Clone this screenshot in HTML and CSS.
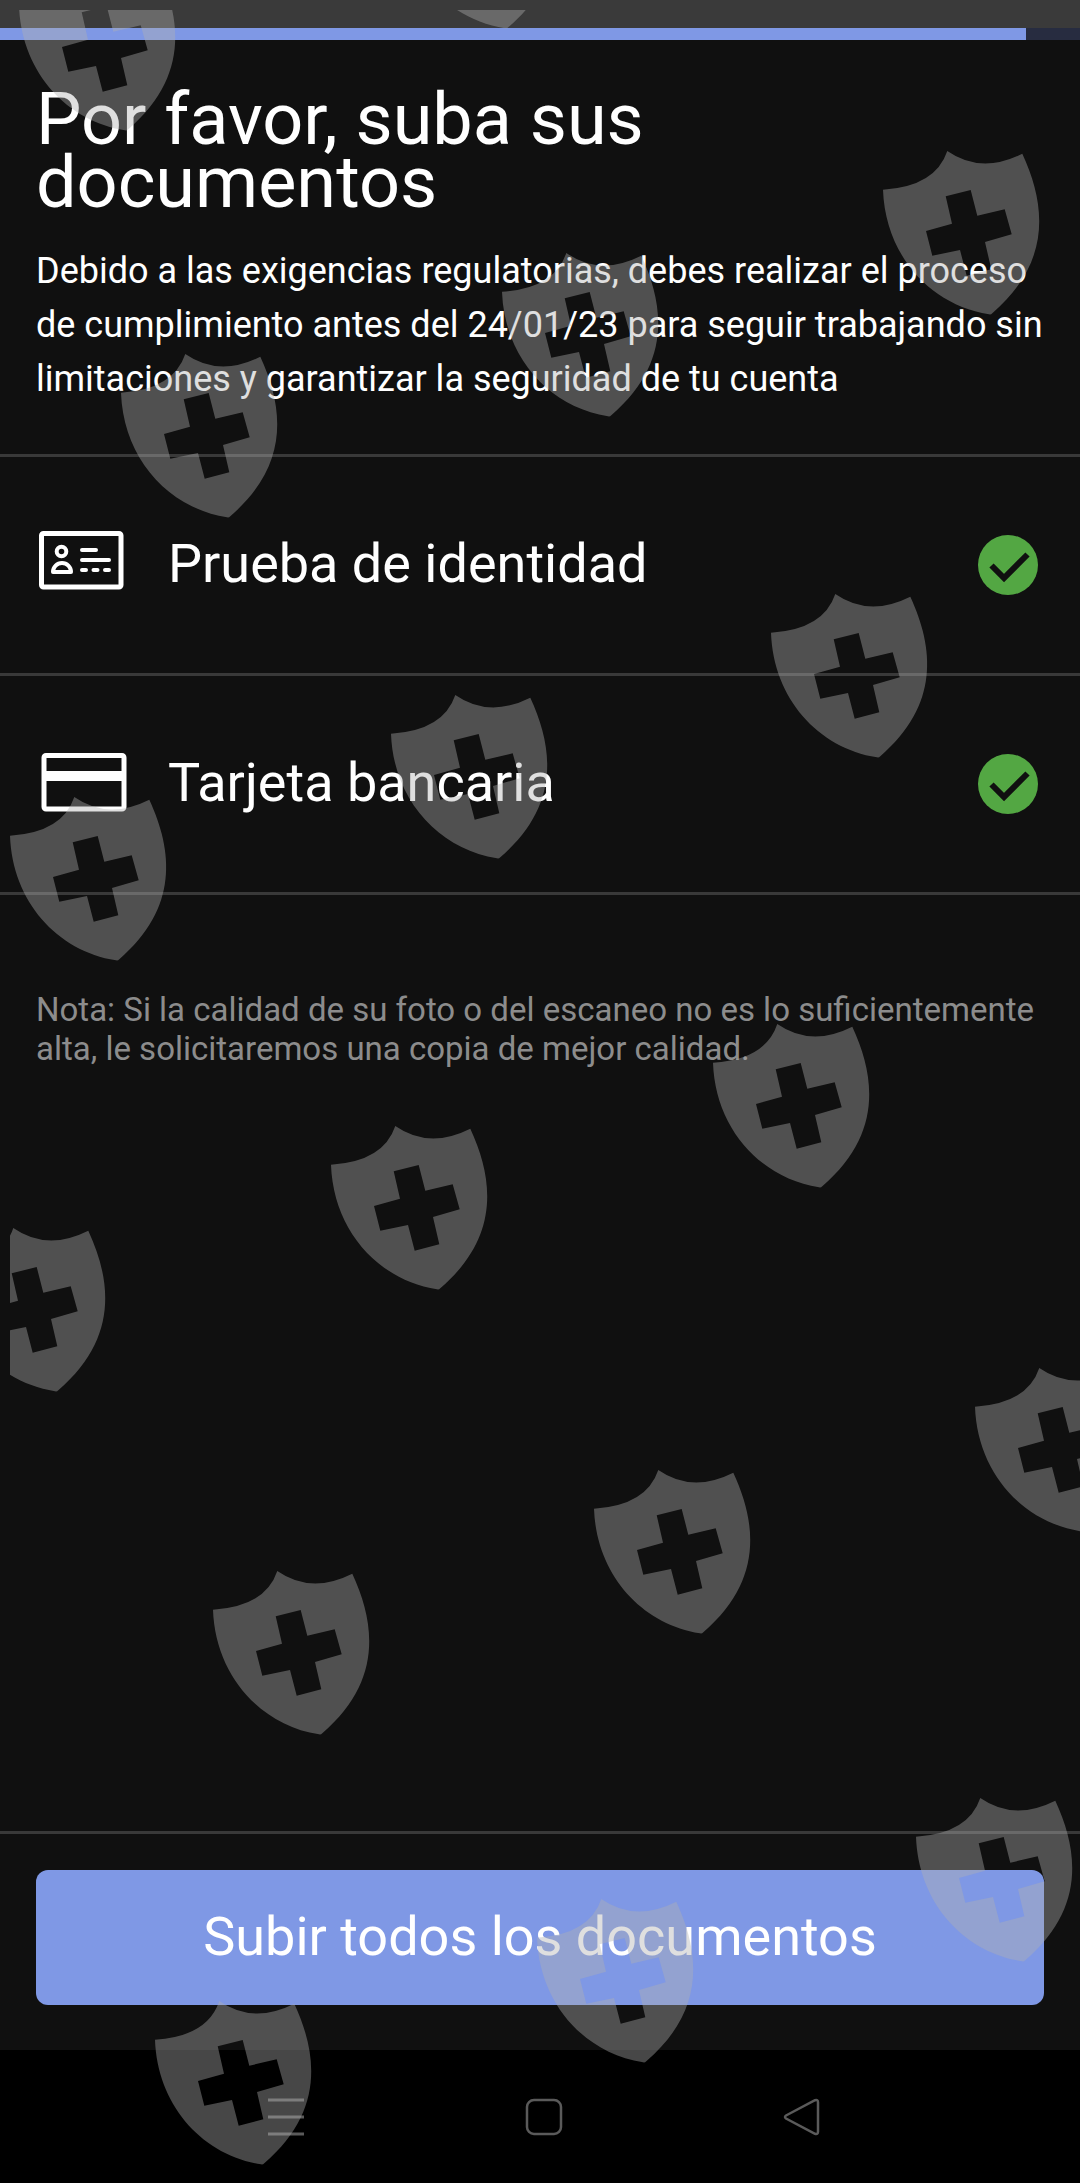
FILE: index.html
```html
<!DOCTYPE html>
<html lang="es">
<head>
<meta charset="utf-8">
<meta name="viewport" content="width=device-width, initial-scale=1">
<title>Suba sus documentos</title>
<link rel="stylesheet" href="styles.css">
</head>
<body>
<div class="status-bar"></div>
<div class="progress" role="progressbar" aria-label="Progreso" aria-valuenow="95" aria-valuemin="0" aria-valuemax="100">
  <div class="progress-fill" style="width: 95%"></div>
</div>

<main class="content">
  <header class="intro">
    <h1 class="title">Por favor, suba sus documentos</h1>
    <p class="lead">Debido a las exigencias regulatorias, debes realizar el proceso de cumplimiento antes del 24/01/23 para seguir trabajando sin limitaciones y garantizar la seguridad de tu cuenta</p>
  </header>

  <ul class="documents">
    <li class="document">
      <svg class="document-icon" viewBox="0 0 96 72" fill="none" stroke="currentColor" stroke-width="5" stroke-linecap="round" stroke-linejoin="round" aria-hidden="true">
        <rect x="5.500" y="4.500" width="79.500" height="53.500" rx="2"/>
        <circle cx="25.500" cy="22.500" r="4.800" stroke-width="4"/>
        <path d="M17 43c0-5 4-9 9-9s9 4 9 9z" stroke-width="4"/>
        <path d="M46 21h14M46 31h27M46 41h4M57.500 41h4M69 41h4" stroke-width="4"/>
      </svg>
      <span class="document-name">Prueba de identidad</span>
      <svg class="document-check" viewBox="0 0 60 60" role="img" aria-label="Completado">
        <circle cx="30" cy="30" r="30" fill="#53a743"/>
        <path d="M13.500 30.500L26 43L49.500 19.500" fill="none" stroke="#101010" stroke-width="6"/>
      </svg>
    </li>
    <li class="document">
      <svg class="document-icon" viewBox="0 0 96 72" fill="none" stroke="currentColor" stroke-width="5" stroke-linejoin="round" aria-hidden="true">
        <rect x="8" y="7.500" width="80" height="53.500" rx="2"/>
        <path d="M8 28h80" stroke-width="10"/>
      </svg>
      <span class="document-name">Tarjeta bancaria</span>
      <svg class="document-check" viewBox="0 0 60 60" role="img" aria-label="Completado">
        <circle cx="30" cy="30" r="30" fill="#53a743"/>
        <path d="M13.500 30.500L26 43L49.500 19.500" fill="none" stroke="#101010" stroke-width="6"/>
      </svg>
    </li>
  </ul>

  <p class="note">Nota: Si la calidad de su foto o del escaneo no es lo suficientemente alta, le solicitaremos una copia de mejor calidad.</p>
</main>

<footer class="actions">
  <button class="submit" type="button">Subir todos los documentos</button>
</footer>

<nav class="system-nav" aria-label="Sistema">
  <button class="nav-button" type="button" aria-label="Menú">
    <svg class="nav-icon" viewBox="0 0 40 40" fill="none" stroke="currentColor" stroke-width="3" aria-hidden="true"><path d="M1 4h36M1 21h36M1 38h36"/></svg>
  </button>
  <button class="nav-button" type="button" aria-label="Inicio">
    <svg class="nav-icon" viewBox="0 0 40 40" fill="none" stroke="currentColor" stroke-width="2.500" aria-hidden="true"><rect x="3" y="4" width="34" height="34" rx="7"/></svg>
  </button>
  <button class="nav-button" type="button" aria-label="Atrás">
    <svg class="nav-icon" viewBox="0 0 40 40" fill="none" stroke="currentColor" stroke-width="2.500" aria-hidden="true"><path d="M5 19.500L34 4.200q3-1 3 2v29.600q0 3-3 2L5 22.500q-2-1.500 0-3z"/></svg>
  </button>
</nav>

<svg class="watermark" aria-hidden="true">
  <defs>
    <path id="shield" fill-rule="evenodd" d="M0 38.700Q52.500 35.500 64.300 0Q98 23.500 139.300 2.700C163 54 169 111 109 162.500Q108 163.700 106 163.300C47 154 2.300 104 0 38.700ZM62.700 45.300L87.700 39L94.300 64.700L121.700 58.300L128.700 83.300L102 91L108.300 118.300L83.700 124.700L77 99L49.300 104.700L43 80L69 72.700Z"/>
  </defs>
  <g transform="translate(-10 -10)">
    <use href="#shield" x="19" y="-33"/>
    <use href="#shield" x="399" y="-135"/>
    <use href="#shield" x="883" y="151"/>
    <use href="#shield" x="502" y="253"/>
    <use href="#shield" x="121" y="354"/>
    <use href="#shield" x="771" y="594"/>
    <use href="#shield" x="391" y="695"/>
    <use href="#shield" x="10" y="797"/>
    <use href="#shield" x="713" y="1024"/>
    <use href="#shield" x="331" y="1126"/>
    <use href="#shield" x="-51" y="1228"/>
    <use href="#shield" x="975" y="1368"/>
    <use href="#shield" x="594" y="1470"/>
    <use href="#shield" x="213" y="1571"/>
    <use href="#shield" x="916" y="1798"/>
    <use href="#shield" x="537" y="1899"/>
    <use href="#shield" x="155" y="2001"/>
  </g>
</svg>
</body>
</html>
```

FILE: styles.css
```css
* {
  box-sizing: border-box;
}

body {
  position: relative;
  display: flex;
  flex-direction: column;
  min-height: 100vh;
  margin: 0;
  background: #101010;
  color: #ffffff;
  font-family: Roboto, "Liberation Sans", sans-serif;
}

.status-bar {
  height: 28px;
  background: #3a3a3a;
}

.progress {
  height: 12px;
  background: #272c40;
}

.progress-fill {
  height: 100%;
  background: #7f98e5;
}

.content {
  flex: 1;
}

.intro {
  padding: 48px 36px;
  border-bottom: 3px solid #393939;
}

.title {
  max-width: 800px;
  margin: 0 0 30px;
  font-size: 72px;
  font-weight: 400;
  line-height: 63px;
}

.lead {
  margin: 0;
  font-size: 36px;
  line-height: 54px;
}

.documents {
  margin: 0;
  padding: 0;
  list-style: none;
}

.document {
  display: flex;
  align-items: center;
  gap: 36px;
  padding: 72px 42px 72px 36px;
  border-bottom: 3px solid #393939;
}

.document-icon {
  flex: none;
  width: 96px;
  height: 72px;
}

.document-name {
  flex: 1;
  padding-bottom: 2px;
  font-size: 54px;
  line-height: 60px;
}

.document-check {
  flex: none;
  width: 60px;
  height: 60px;
}

.note {
  margin: 95px 36px;
  color: #8c8c8c;
  font-size: 33px;
  line-height: 39px;
}

.actions {
  padding: 36px 36px 45px;
  border-top: 3px solid #393939;
}

.submit {
  display: block;
  width: 100%;
  padding: 35px 36px 37px;
  border: 0;
  border-radius: 12px;
  background: #7f98e5;
  color: inherit;
  font-family: inherit;
  font-size: 54px;
  line-height: 63px;
}

.system-nav {
  display: grid;
  grid-template-columns: repeat(3, 1fr);
  padding: 0 150px 0 158px;
  background: #000000;
}

.nav-button {
  display: flex;
  align-items: center;
  justify-content: center;
  padding: 46px 0 47px;
  border: 0;
  background: none;
  color: #5a5a5a;
}

.nav-icon {
  width: 40px;
  height: 40px;
}

/* Security pattern laid over the whole screen */
.watermark {
  position: absolute;
  top: 10px;
  left: 10px;
  width: calc(100% - 10px);
  height: calc(100% - 10px);
  overflow: hidden;
  fill: #b1b1b1;
  opacity: 0.4;
  pointer-events: none;
}
```
